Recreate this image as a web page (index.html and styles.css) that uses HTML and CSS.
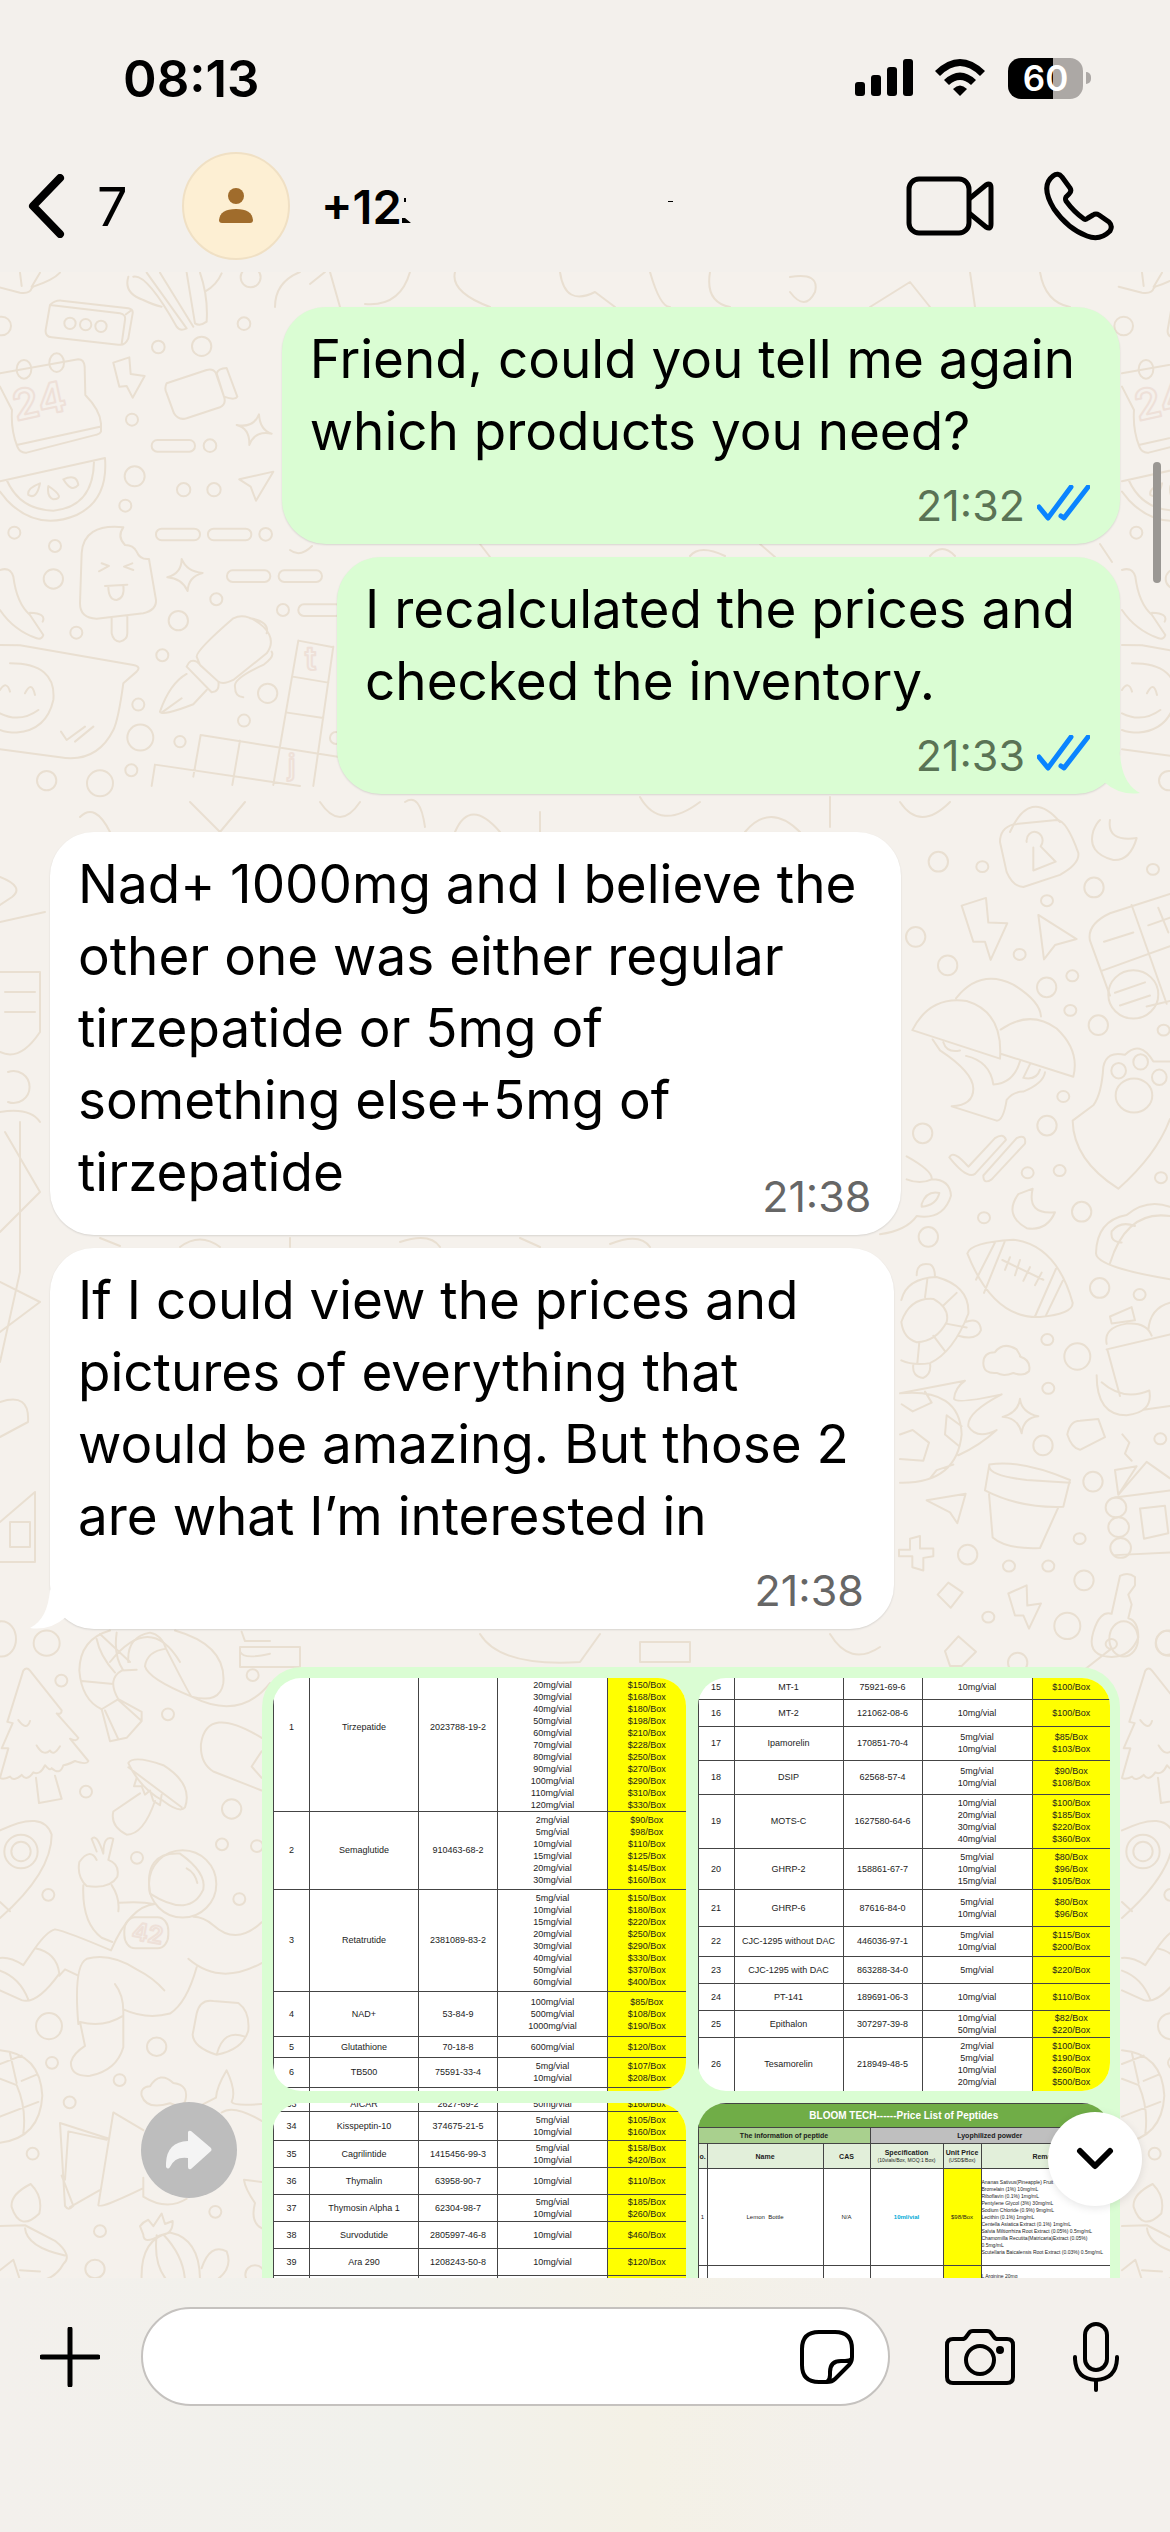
FILE: index.html
```html
<!DOCTYPE html>
<html lang="en">
<head>
<meta charset="utf-8">
<meta name="viewport" content="width=device-width, initial-scale=1">
<title>Chat</title>
<link rel="stylesheet" href="styles.css">
</head>
<body>
<header class="top">
  <div class="status">
    <time class="clock">08:13</time>
    <div class="status-icons">
      <svg width="58" height="38" viewBox="0 0 58 38"><rect x="0" y="23" width="10" height="14" rx="3"/><rect x="16" y="16" width="10" height="21" rx="3"/><rect x="32" y="8" width="10" height="29" rx="3"/><rect x="48" y="0" width="10" height="37" rx="3"/></svg>
      <svg class="wifi" width="50" height="38" viewBox="0 0 50 38"><path d="M0 12Q25-12 50 12L45 17Q25-3 5 17Z"/><path d="M9 21Q25 6 41 21L36 26Q25 16 14 26Z"/><path d="M18 30Q25 23 32 30L25 37Z"/></svg>
      <div class="battery"><span class="cell">60</span><span class="nub"></span></div>
    </div>
  </div>
  <nav class="bar">
    <a class="back" href="#chats" aria-label="Back to chats"><svg width="37" height="64" viewBox="0 0 37 64"><path d="M32 4L5 32L32 60" fill="none" stroke="#000" stroke-width="8" stroke-linecap="round" stroke-linejoin="round"/></svg><span>7</span></a>
    <a class="contact" href="#contact"><span class="avatar"><svg width="34" height="36" viewBox="0 0 34 36"><circle cx="17" cy="8" r="8"/><path d="M0 32Q1 21 17 21Q33 21 34 32Q34 35 31 35H3Q0 35 0 32Z"/></svg></span>
    <span class="name">+12</span><svg class="scrap" width="290" height="36" viewBox="0 0 290 36"><path d="M0 30H3L9 35H0ZM2 10H4V14H2Z"/><path d="M266 13H271V14H266Z"/></svg></a>
    <button class="icon video" aria-label="Video call"><svg width="88" height="60" viewBox="0 0 88 60"><g fill="none" stroke="#000" stroke-width="5" stroke-linejoin="round"><rect x="3" y="3" width="60" height="54" rx="10"/><path d="M63 23L80 9Q85 6 85 12V48Q85 54 80 51L63 37"/></g></svg></button>
    <button class="icon" aria-label="Voice call"><svg width="70" height="70" viewBox="0 0 70 70"><path d="M9 5Q14 1 18 6L26 17Q28 20 25 23L22 26Q21 28 22 30Q30 41 40 48Q42 49 44 47L49 44Q52 42 55 44L65 51Q69 55 66 60Q56 70 43 65Q24 58 10 38Q-4 15 9 5Z" fill="none" stroke="#000" stroke-width="5" stroke-linejoin="round"/></svg></button>
  </nav>
</header>

<main class="chat">
  <svg class="wallpaper" viewBox="0 0 1170 2006" preserveAspectRatio="xMidYMin slice" aria-hidden="true">
    <defs>
      <g id="doodles-a">
        <g transform="translate(0 -2) scale(.3333)">
          <path d="M-10 50L60 68Q90 72 95 55L100 50Q160 30 180 8M60 8L65 48M120 8L95 50M385 20Q370 70 430 90Q460 105 485 110M400 20Q440 10 530 170Q540 185 560 175L440 8M480 8L580 170M560 8L585 160Q600 170 620 155Q625 80 600 8M615 65Q650 45 665 10M150 105Q165 90 185 92L385 115Q400 118 398 130L385 205Q375 228 355 224L155 202Q135 200 137 180ZM150 105L360 130Q378 133 375 150L365 222M378 133L395 120"/>
          <circle cx="210" cy="160" r="17"/><circle cx="257" cy="164" r="17"/><circle cx="303" cy="169" r="17"/><circle cx="732" cy="161" r="19"/><circle cx="475" cy="231" r="19"/><circle cx="605" cy="229" r="29"/><circle cx="752" cy="22" r="30"/><circle cx="5" cy="168" r="28"/>
          <path d="M0 310L235 268Q252 268 254 290L256 375Q300 420 303 460V485Q300 492 290 494L80 548Q60 550 52 530Q32 480 36 420L0 350M50 525L300 470M340 278L388 262L392 312L434 318L398 383L380 348L358 350ZM500 340Q492 355 500 370L522 430Q535 452 560 445L660 412Q680 402 672 380L648 310Q640 295 620 300ZM650 310Q655 295 680 294L712 380Q706 392 672 380Z"/>
          <ellipse cx="72" cy="298" rx="22" ry="28"/><ellipse cx="170" cy="278" rx="22" ry="28"/>
          <circle cx="396" cy="449" r="18"/><path d="M777 433Q780 480 815 491Q765 480 748 525Q750 475 710 465Q760 475 777 433ZM718 628L820 605L768 692L752 650Z"/>
          <rect x="455" y="510" width="130" height="35" rx="17"/><circle cx="630" cy="527" r="19"/>
          <path d="M0 634L315 564Q325 690 230 735Q110 785 20 690L0 665M20 630Q60 720 160 722Q280 710 282 575M120 640Q80 655 85 675Q110 690 120 640ZM145 648Q140 680 160 688Q200 685 145 648ZM190 628Q230 610 235 645Q215 670 190 628Z"/>
          <circle cx="404" cy="619" r="30"/><circle cx="551" cy="659" r="20"/><circle cx="642" cy="659" r="20"/><circle cx="376" cy="707" r="18"/><circle cx="43" cy="788" r="18"/><circle cx="165" cy="828" r="18"/><circle cx="160" cy="927" r="29"/>
          <rect x="468" y="776" width="132" height="35" rx="17"/><rect x="624" y="776" width="130" height="35" rx="17"/><circle cx="797" cy="793" r="19"/><rect x="681" y="901" width="130" height="35" rx="17"/><rect x="836" y="901" width="130" height="35" rx="17"/><circle cx="849" cy="1020" r="18"/><rect x="895" y="1003" width="130" height="35" rx="17"/>
          <path d="M245 850Q250 760 370 772Q350 800 375 825Q400 825 410 845Q420 870 447 867L468 990Q470 1020 430 1030L290 1046Q240 1045 240 1000ZM335 1043V1090Q340 1115 360 1115Q382 1110 382 1090V1038M305 880L327 888L297 904M397 880L372 890L400 900M315 948L382 944M325 948Q325 990 350 990Q375 985 370 945M545 867Q560 905 608 909Q565 920 563 963Q545 925 502 922Q545 910 545 867Z"/>
          <circle cx="649" cy="988" r="18"/><circle cx="535" cy="1052" r="29"/><circle cx="229" cy="1088" r="18"/><circle cx="487" cy="1156" r="18"/><circle cx="803" cy="1270" r="29"/><circle cx="415" cy="1304" r="18"/><circle cx="732" cy="1352" r="18"/><circle cx="421" cy="1403" r="39"/><circle cx="540" cy="1415" r="17"/><circle cx="394" cy="1501" r="18"/><circle cx="140" cy="1532" r="29"/><circle cx="300" cy="1540" r="39"/><circle cx="1008" cy="1404" r="18"/>
          <path d="M0 900Q30 890 40 920Q50 1000 90 1035L130 1095Q125 1110 110 1105Q40 1080 0 1020M90 1028Q140 1030 128 1055M0 1125L60 1126L400 1185Q425 1190 410 1205L370 1240Q355 1350 340 1380Q290 1480 180 1462L0 1438M30 1180Q170 1180 160 1290Q140 1380 50 1388Q20 1388 0 1380M0 1330Q60 1360 115 1320M75 1270Q95 1230 105 1275M0 1260Q20 1230 30 1265M183 1385L200 1410L255 1370M225 1415L280 1370"/>
          <path d="M590 1160Q590 1140 700 1045Q740 1025 790 1070Q830 1110 800 1150L700 1230Q670 1245 655 1235L600 1185ZM560 1190Q570 1165 590 1175L655 1235Q660 1265 635 1267ZM560 1212Q510 1240 480 1325Q485 1340 580 1303L620 1260M485 1328L545 1285M750 1045Q810 1055 800 1090M815 1145Q825 1160 790 1185Q700 1225 705 1250Q705 1280 730 1282M895 1112L820 1545M1000 1130L940 1548M895 1112L1000 1132M878 1220L985 1238M862 1328L970 1344M602 1395L1075 1470M602 1395L580 1520M720 1412L697 1545M465 1484L900 1548M465 1484L455 1548"/>
        </g>
        <g class="glyphs"><text x="16" y="149" font-size="42" transform="rotate(-12 16 149)">24</text><text x="305" y="398" font-size="32">t</text><text x="288" y="503" font-size="28">j</text></g>
      </g>
    </defs>
    <use href="#doodles-a"/>
    <use href="#doodles-a" x="1122"/>
    <g transform="translate(270 0)"><path d="M5 35Q5 10 30 0M40 12L55 0M70 35L60 0M95 32Q130 35 140 0M220 35Q180 20 185 0M290 0Q295 35 325 20L345 35M380 0Q390 35 400 35M440 0Q435 30 460 35M520 5Q550 0 545 20Q535 40 520 20M600 35L640 10L660 35M700 0L705 35M770 0Q775 30 800 35"/></g>
    <path d="M290 278Q300 286 312 274M480 272L490 285M690 284Q700 272 725 284M760 272L775 285M930 284Q942 270 955 284M1100 272L1112 290M405 530Q420 520 425 555M455 560Q470 525 500 560M540 540V560M640 525Q660 560 700 530M745 560Q770 530 800 560M830 525V555M900 530Q920 560 950 530M1010 560Q1030 515 1060 550M80 545Q95 530 110 560M190 530L220 560L245 530M320 530Q340 560 360 530"/>
    <path d="M100 966L120 974M180 975Q200 960 220 975M290 966V975M400 970Q430 960 440 975M520 966L540 975M610 972Q640 960 650 975M100 1362L130 1390M110 1390Q150 1340 180 1390M240 1375H300V1395H240ZM480 1362Q500 1395 580 1390L600 1362M640 1370H690V1390H640ZM830 1362Q850 1395 880 1375M0 605Q25 615 12 625L0 633M0 840Q30 835 40 850M20 850V1000L0 1090M0 650L45 640M0 700H40V760Q20 790 0 780M5 720H35M5 740H35M8 800A16 16 0 1 1 8 830M5 860L40 920L0 960M0 1010L40 1030L0 1060M0 1130Q30 1120 28 1150L0 1165M0 1250L35 1220V1290H0M10 1250H30V1275H10Z"/>
    <g transform="translate(880 548) scale(.3333 .5486)">
      <path d="M360 40Q360 15 400 8L530 0Q560 0 595 60Q600 80 540 100L430 122Q400 122 380 95ZM440 40A24 16 0 1 1 482 48L527 76L460 92V50M690 0Q680 40 770 33Q750 75 700 73Q620 60 640 20Q650 5 660 0M245 156L318 142L325 187L382 188L332 255L315 222H280ZM475 173L590 217L525 228L492 254Z"/>
      <path d="M870 135L690 170Q620 190 630 220L690 320M665 275L870 230M755 155L860 335M800 340L870 330M672 222L760 205M805 192L870 178M835 160L865 205M705 315L795 296M720 338L810 320"/><ellipse cx="760" cy="318" rx="75" ry="44"/>
      <path d="M97 383Q150 320 260 330Q370 350 360 435ZM228 325Q300 270 400 300Q480 330 483 358M362 382Q450 345 530 380Q600 420 580 468L362 426M158 400L180 420Q280 460 280 490Q280 520 215 522L350 548Q370 548 380 510Q400 495 430 495Q490 480 495 460M258 430Q330 440 340 482Q400 480 420 440M190 405Q200 425 240 420M450 445L430 470Q470 475 480 455"/>
      <path d="M670 450Q680 420 735 428Q780 400 820 440Q850 440 870 440M670 450Q665 500 640 520L578 548Q580 620 715 672Q830 610 870 545"/><ellipse cx="716" cy="457" rx="22" ry="14"/><ellipse cx="782" cy="441" rx="22" ry="14"/><ellipse cx="838" cy="469" rx="22" ry="14"/><ellipse cx="762" cy="502" rx="55" ry="31"/>
      <path d="M208 615Q220 600 265 632L345 580Q370 570 378 583L285 645Q260 655 208 615ZM310 648L410 580Q440 572 435 590L335 655Q310 665 310 648ZM458 672Q440 720 525 715Q500 750 440 744Q370 720 415 682ZM80 613Q160 640 155 655Q120 665 80 655M155 655Q210 655 213 685Q190 730 110 722Q80 748 0 755M125 700Q140 675 178 680Q170 702 125 705Z"/>
      <path d="M262 790Q270 770 400 765Q530 775 578 880Q580 900 480 906Q340 910 262 790ZM345 770L288 838M375 767L312 862M528 818L465 905M548 840L498 903M367 802L490 838M390 797L375 820M420 802L405 830M450 815L430 840M485 825L465 848M648 790Q650 730 740 720Q800 690 870 705M648 790Q650 815 870 837M690 808Q740 710 870 722M725 770Q690 770 695 750Q720 730 765 740M64 875Q80 835 170 833Q270 850 265 900Q220 970 150 990Q100 995 64 985M64 915Q90 870 160 873Q210 890 200 915Q170 950 110 952Q70 945 64 915M135 870L142 838M190 885L230 862M198 918L260 925M160 940L195 968M118 952L112 990M110 830Q110 805 150 810Q165 815 165 833M255 915Q300 905 303 930Q290 950 235 940M100 992Q95 1015 130 1017Q155 1010 150 990"/>
      <path d="M310 990Q310 970 345 970Q370 950 410 965Q425 980 420 978Q455 985 447 1005Q430 1015 400 1008Q370 1015 350 1008Q310 1010 310 990ZM680 955Q670 925 740 918Q800 915 815 940M680 965L870 938M682 965L720 1050M690 905L755 888L765 912L695 918ZM805 930Q810 890 870 880M650 1012Q650 1085 740 1085Q820 1080 808 1040Q730 1060 665 1025M790 1075L870 1068M60 1045L255 1022Q225 1035 222 1055Q230 1065 365 1047Q260 1080 265 1105Q290 1130 350 1112Q300 1140 235 1158M60 1045Q240 1035 245 1120Q230 1210 60 1208M60 1120L98 1112L147 1135L130 1168L60 1165M200 1085L245 1105M200 1085L195 1120L235 1140M65 1065L98 1078L155 1062L135 1042M150 1200L170 1185L220 1175M420 1055Q425 1080 475 1087Q430 1090 425 1118Q415 1090 368 1088Q415 1080 420 1055ZM562 1120Q570 1095 600 1095L655 1092L675 1125L600 1148Q575 1145 562 1120Z"/>
      <path d="M328 1175Q420 1165 570 1203L550 1252Q420 1255 315 1222ZM328 1175Q320 1195 440 1203L570 1208M327 1228L338 1308Q380 1330 480 1327L535 1253M140 1240L257 1228L232 1282L210 1262ZM90 1310L120 1305V1328H160V1342L130 1345V1368L97 1362V1342H57V1330H90ZM173 1412L205 1390L248 1408L212 1436ZM385 1410L440 1395L442 1432L483 1428L447 1474L430 1450H405ZM195 1515L235 1488L288 1516L245 1542H210ZM705 1185L770 1178L715 1230ZM715 1230L800 1170L870 1200M705 1235L870 1222M780 1255L855 1250L865 1300L792 1310ZM705 1340L870 1335M727 1120L748 1135L735 1155L755 1168M640 1480Q660 1440 695 1447L720 1378Q745 1370 765 1380V1395L745 1412L755 1430L745 1455Q775 1460 775 1490Q750 1530 680 1525Q620 1520 640 1480ZM695 1510L615 1548"/><ellipse cx="708" cy="1253" rx="31" ry="18"/><ellipse cx="716" cy="1289" rx="31" ry="18"/><ellipse cx="722" cy="1327" rx="31" ry="18"/><ellipse cx="694" cy="1502" rx="17" ry="9"/>
      <g><ellipse cx="175" cy="76" rx="29" ry="18"/><ellipse cx="307" cy="85" rx="18" ry="10"/><ellipse cx="642" cy="123" rx="29" ry="18"/><ellipse cx="819" cy="90" rx="18" ry="10"/><ellipse cx="501" cy="147" rx="18" ry="10"/><ellipse cx="419" cy="245" rx="18" ry="10"/><ellipse cx="107" cy="213" rx="29" ry="18"/><ellipse cx="203" cy="265" rx="29" ry="18"/><ellipse cx="500" cy="305" rx="29" ry="18"/><ellipse cx="577" cy="284" rx="18" ry="10"/><ellipse cx="571" cy="347" rx="18" ry="10"/><ellipse cx="655" cy="374" rx="29" ry="18"/><ellipse cx="851" cy="383" rx="18" ry="10"/><ellipse cx="550" cy="504" rx="18" ry="10"/><ellipse cx="501" cy="557" rx="29" ry="18"/><ellipse cx="128" cy="571" rx="29" ry="18"/><ellipse cx="443" cy="643" rx="18" ry="10"/><ellipse cx="539" cy="639" rx="18" ry="10"/><ellipse cx="843" cy="652" rx="18" ry="10"/><ellipse cx="605" cy="714" rx="29" ry="18"/><ellipse cx="312" cy="725" rx="18" ry="10"/><ellipse cx="145" cy="760" rx="29" ry="18"/><ellipse cx="659" cy="853" rx="29" ry="18"/><ellipse cx="779" cy="865" rx="18" ry="10"/><ellipse cx="502" cy="947" rx="18" ry="10"/><ellipse cx="592" cy="978" rx="39" ry="24"/><ellipse cx="505" cy="1036" rx="18" ry="10"/><ellipse cx="489" cy="1140" rx="29" ry="18"/><ellipse cx="841" cy="1128" rx="18" ry="10"/><ellipse cx="639" cy="1206" rx="29" ry="18"/><ellipse cx="599" cy="1310" rx="18" ry="10"/><ellipse cx="263" cy="1339" rx="29" ry="18"/><ellipse cx="387" cy="1360" rx="18" ry="10"/><ellipse cx="505" cy="1360" rx="18" ry="10"/><ellipse cx="612" cy="1386" rx="29" ry="18"/><ellipse cx="325" cy="1453" rx="18" ry="10"/><ellipse cx="562" cy="1469" rx="39" ry="24"/><ellipse cx="413" cy="1536" rx="29" ry="18"/><ellipse cx="860" cy="1500" rx="32" ry="22"/></g>
    </g>
    <g id="doodles-b">
      <g transform="translate(0 1348) scale(.3333 .4209)">
      <path d="M70 120Q80 110 90 120L185 215Q185 225 170 222L235 280Q230 290 210 282L265 335Q260 345 225 335Q200 345 190 345Q180 370 155 352Q150 360 135 345Q120 370 100 362Q80 385 65 368Q40 385 30 372Q10 380 0 375L25 305L5 305L38 245L22 242ZM108 375L117 435L185 425L165 370M55 238Q80 265 90 240M110 298Q130 325 150 310Q160 325 180 300"/>
      <path d="M330 25Q240 45 238 120Q245 190 305 212L330 288L380 280L425 240L425 218L355 188Q320 140 365 120L410 118M290 45Q300 85 345 125M350 30Q340 85 370 120M245 145L340 152M305 212L355 188M315 215L355 283M355 190L425 240M385 100Q380 40 450 30Q485 35 498 68Q570 180 575 182Q660 200 670 150Q680 60 525 25M435 110Q440 75 498 68M435 110Q445 140 575 182Q720 240 810 150M720 75Q730 95 810 80M725 28L735 50H810"/>
      <path d="M385 340Q400 320 490 345Q580 390 555 445Q540 460 490 430Q420 400 385 340ZM385 350L545 445M410 375L402 395H425L435 415L450 405L460 430L480 440L485 415M420 412L340 455Q330 490 380 510Q430 510 465 430M785 280Q620 200 603 295Q600 340 640 360L785 405M785 312L755 348L785 375M0 500Q130 450 155 510Q155 600 0 708M0 670L30 692"/>
      <ellipse cx="63" cy="550" rx="50" ry="40"/><ellipse cx="63" cy="550" rx="29" ry="23"/><ellipse cx="548" cy="627" rx="101" ry="80"/><path d="M450 650Q430 550 540 555Q620 600 610 640Q570 710 450 650M560 590Q585 600 592 625"/>
      <path d="M290 550L275 520Q290 505 310 555Q310 510 340 520L325 570Q360 580 352 610Q330 640 260 632Q230 610 238 575Q270 540 290 570M250 630Q245 720 305 755L337 765M335 630Q360 660 355 692M357 672Q420 668 465 675Q390 680 333 785Q200 740 165 735Q140 740 105 780L70 820Q30 800 0 803M105 780Q170 790 178 840Q110 915 65 903L0 880M0 833Q60 850 85 902M178 845L195 830L235 845M235 960Q220 820 260 805Q330 790 410 830Q460 850 493 880M345 865Q370 890 370 930V1015Q350 1070 270 1083Q210 1085 213 1050Q220 1030 255 1012L240 955M240 955Q310 970 370 940M370 925Q440 950 510 935Q560 910 590 825M565 805Q660 870 785 815M580 705Q610 705 640 725Q710 775 785 718"/><rect x="373" y="706" width="132" height="74" rx="32"/>
      <path d="M590 935Q600 900 640 905L715 910Q750 930 745 975Q730 1020 650 1033Q580 1015 578 985ZM650 1033Q670 970 735 990M425 1130Q420 1110 450 1108Q480 1070 520 1100Q570 1105 555 1145Q540 1160 510 1148Q440 1165 425 1130M648 1135Q650 1110 680 1070Q710 1120 695 1145Q700 1155 785 1150M648 1135L610 1150M0 1022Q120 1030 127 1130Q120 1230 0 1242M0 1055L65 1035M30 1030L50 1100M0 1090L50 1105Q80 1160 70 1220M65 1095L110 1080M0 1180L115 1145M180 1195L195 1392Q205 1405 220 1392L185 1320M180 1195L325 1232M205 1215L195 1330M205 1215L320 1235M340 1170L295 1390Q300 1400 430 1350M340 1170L430 1212M210 1395L298 1355M430 1325V1370Q500 1405 560 1375M35 1395Q30 1365 92 1340Q130 1370 118 1410Q60 1455 35 1395ZM0 1440L75 1438L165 1475Q220 1510 190 1530Q170 1560 130 1568M75 1445Q80 1490 195 1510M0 1545L40 1520L60 1568M60 1545L120 1548M425 1568Q420 1470 510 1455Q600 1470 600 1568M470 1462Q460 1530 500 1568M490 1460Q550 1510 555 1568M420 1440Q430 1430 445 1425L460 1440L485 1410L495 1435L518 1428Q520 1460 480 1462Q430 1485 430 1460ZM605 1540Q630 1480 680 1500Q700 1540 650 1568M785 1335L732 1330Q735 1350 765 1385Q750 1430 785 1445M665 1170Q700 1150 785 1190"/>
      <ellipse cx="140" cy="55" rx="39" ry="30"/><ellipse cx="5" cy="45" rx="43" ry="42"/><ellipse cx="184" cy="144" rx="18" ry="14"/><ellipse cx="504" cy="224" rx="18" ry="14"/><ellipse cx="758" cy="131" rx="18" ry="14"/><ellipse cx="258" cy="408" rx="18" ry="14"/><ellipse cx="695" cy="449" rx="29" ry="23"/><ellipse cx="666" cy="533" rx="18" ry="14"/><ellipse cx="771" cy="537" rx="18" ry="14"/><ellipse cx="411" cy="565" rx="18" ry="14"/><ellipse cx="145" cy="653" rx="18" ry="14"/><ellipse cx="718" cy="663" rx="18" ry="14"/><ellipse cx="147" cy="965" rx="39" ry="31"/><ellipse cx="470" cy="1014" rx="29" ry="22"/><ellipse cx="156" cy="1052" rx="18" ry="14"/><ellipse cx="359" cy="1093" rx="18" ry="14"/><ellipse cx="209" cy="1146" rx="18" ry="14"/><ellipse cx="98" cy="1268" rx="18" ry="14"/><ellipse cx="646" cy="1406" rx="18" ry="14"/><ellipse cx="300" cy="1452" rx="18" ry="14"/><ellipse cx="285" cy="1542" rx="29" ry="22"/><ellipse cx="765" cy="1555" rx="29" ry="22"/>
      </g>
      <g class="glyphs"><text x="131" y="1667" font-size="24" transform="rotate(10 131 1667)">42</text></g>
    </g>
    <use href="#doodles-b" x="1122"/>
  </svg>

  <article class="bubble out">
    <p>Friend, could you tell me again<br>which products you need?</p>
    <footer><time>21:32</time><svg class="ticks" width="53" height="36" viewBox="0 0 53 36"><path d="M2 22L11 33L34 2M24 31L27 33L51 2"/></svg></footer>
  </article>
  <article class="bubble out last">
    <p>I recalculated the prices and<br>checked the inventory.</p>
    <footer><time>21:33</time><svg class="ticks" width="53" height="36" viewBox="0 0 53 36"><path d="M2 22L11 33L34 2M24 31L27 33L51 2"/></svg></footer>
    <svg class="tail tail-out" width="40" height="40" viewBox="0 0 40 40"><path d="M20 0Q22 30 40 39Q20 42 4 28Z"/></svg>
  </article>
  <article class="bubble in inline-time">
    <p>Nad+ 1000mg and I believe the<br>other one was either regular<br>tirzepatide or 5mg of<br>something else+5mg of<br>tirzepatide</p>
    <footer><time>21:38</time></footer>
  </article>
  <article class="bubble in last">
    <p>If I could view the prices and<br>pictures of everything that<br>would be amazing. But those 2<br>are what I’m interested in</p>
    <footer><time>21:38</time></footer>
    <svg class="tail tail-in" width="40" height="40" viewBox="0 0 40 40"><path d="M20 0Q18 30 0 39Q20 42 36 28Z"/></svg>
  </article>

  <div class="media-row">
    <button class="forward" aria-label="Forward"><svg width="46" height="40" viewBox="0 0 46 40"><path d="M22 2Q23 0 25 1L45 18Q46 20 45 21L25 39Q22 40 22 37V28Q9 26 4 37Q2 40 0 37Q-1 12 22 11Z" fill="#f4f4f4"/></svg></button>
    <article class="album">
      <div class="tile end"><table class="list">
        <colgroup><col class="c-no"><col class="c-name"><col class="c-cas"><col class="c-spec"><col></colgroup>
        <tr class="h168 open"><td>1</td><td>Tirzepatide</td><td>2023788-19-2</td><td>20mg/vial<br>30mg/vial<br>40mg/vial<br>50mg/vial<br>60mg/vial<br>70mg/vial<br>80mg/vial<br>90mg/vial<br>100mg/vial<br>110mg/vial<br>120mg/vial</td><td>$150/Box<br>$168/Box<br>$180/Box<br>$198/Box<br>$210/Box<br>$228/Box<br>$250/Box<br>$270/Box<br>$290/Box<br>$310/Box<br>$330/Box</td></tr>
        <tr class="h78"><td>2</td><td>Semaglutide</td><td>910463-68-2</td><td>2mg/vial<br>5mg/vial<br>10mg/vial<br>15mg/vial<br>20mg/vial<br>30mg/vial</td><td>$90/Box<br>$98/Box<br>$110/Box<br>$125/Box<br>$145/Box<br>$160/Box</td></tr>
        <tr class="h102"><td>3</td><td>Retatrutide</td><td>2381089-83-2</td><td>5mg/vial<br>10mg/vial<br>15mg/vial<br>20mg/vial<br>30mg/vial<br>40mg/vial<br>50mg/vial<br>60mg/vial</td><td>$150/Box<br>$180/Box<br>$220/Box<br>$250/Box<br>$290/Box<br>$330/Box<br>$370/Box<br>$400/Box</td></tr>
        <tr class="h45"><td>4</td><td>NAD+</td><td>53-84-9</td><td>100mg/vial<br>500mg/vial<br>1000mg/vial</td><td>$85/Box<br>$108/Box<br>$190/Box</td></tr>
        <tr class="h21"><td>5</td><td>Glutathione</td><td>70-18-8</td><td>600mg/vial</td><td>$120/Box</td></tr>
        <tr class="h30"><td>6</td><td>TB500</td><td>75591-33-4</td><td>5mg/vial<br>10mg/vial</td><td>$107/Box<br>$208/Box</td></tr>
        <tr class="h4"><td></td><td></td><td></td><td></td><td></td></tr>
      </table></div>
      <div class="tile end"><table class="list">
        <colgroup><col class="c-no"><col class="c-name"><col class="c-cas"><col class="c-spec"><col></colgroup>
        <tr class="h25"><td>15</td><td>MT-1</td><td>75921-69-6</td><td>10mg/vial</td><td>$100/Box</td></tr>
        <tr class="h27"><td>16</td><td>MT-2</td><td>121062-08-6</td><td>10mg/vial</td><td>$100/Box</td></tr>
        <tr class="h34"><td>17</td><td>Ipamorelin</td><td>170851-70-4</td><td>5mg/vial<br>10mg/vial</td><td>$85/Box<br>$103/Box</td></tr>
        <tr class="h34"><td>18</td><td>DSIP</td><td>62568-57-4</td><td>5mg/vial<br>10mg/vial</td><td>$90/Box<br>$108/Box</td></tr>
        <tr class="h54"><td>19</td><td>MOTS-C</td><td>1627580-64-6</td><td>10mg/vial<br>20mg/vial<br>30mg/vial<br>40mg/vial</td><td>$100/Box<br>$185/Box<br>$220/Box<br>$360/Box</td></tr>
        <tr class="h41"><td>20</td><td>GHRP-2</td><td>158861-67-7</td><td>5mg/vial<br>10mg/vial<br>15mg/vial</td><td>$80/Box<br>$96/Box<br>$105/Box</td></tr>
        <tr class="h37"><td>21</td><td>GHRP-6</td><td>87616-84-0</td><td>5mg/vial<br>10mg/vial</td><td>$80/Box<br>$96/Box</td></tr>
        <tr class="h30"><td>22</td><td>CJC-1295 without DAC</td><td>446036-97-1</td><td>5mg/vial<br>10mg/vial</td><td>$115/Box<br>$200/Box</td></tr>
        <tr class="h27"><td>23</td><td>CJC-1295 with DAC</td><td>863288-34-0</td><td>5mg/vial</td><td>$220/Box</td></tr>
        <tr class="h27"><td>24</td><td>PT-141</td><td>189691-06-3</td><td>10mg/vial</td><td>$110/Box</td></tr>
        <tr class="h27"><td>25</td><td>Epithalon</td><td>307297-39-8</td><td>10mg/vial<br>50mg/vial</td><td>$82/Box<br>$220/Box</td></tr>
        <tr class="h54"><td>26</td><td>Tesamorelin</td><td>218949-48-5</td><td>2mg/vial<br>5mg/vial<br>10mg/vial<br>20mg/vial</td><td>$100/Box<br>$190/Box<br>$260/Box<br>$500/Box</td></tr>
      </table></div>
      <div class="tile"><table class="list scrolled">
        <colgroup><col class="c-no"><col class="c-name"><col class="c-cas"><col class="c-spec"><col></colgroup>
        <tr class="h16"><td>33</td><td>AICAR</td><td>2627-69-2</td><td>50mg/vial</td><td>$160/Box</td></tr>
        <tr class="h29"><td>34</td><td>Kisspeptin-10</td><td>374675-21-5</td><td>5mg/vial<br>10mg/vial</td><td>$105/Box<br>$160/Box</td></tr>
        <tr class="h27"><td>35</td><td>Cagrilintide</td><td>1415456-99-3</td><td>5mg/vial<br>10mg/vial</td><td>$158/Box<br>$420/Box</td></tr>
        <tr class="h27"><td>36</td><td>Thymalin</td><td>63958-90-7</td><td>10mg/vial</td><td>$110/Box</td></tr>
        <tr class="h27"><td>37</td><td>Thymosin Alpha 1</td><td>62304-98-7</td><td>5mg/vial<br>10mg/vial</td><td>$185/Box<br>$260/Box</td></tr>
        <tr class="h27"><td>38</td><td>Survodutide</td><td>2805997-46-8</td><td>10mg/vial</td><td>$460/Box</td></tr>
        <tr class="h27"><td>39</td><td>Ara 290</td><td>1208243-50-8</td><td>10mg/vial</td><td>$120/Box</td></tr>
        <tr class="h45"><td></td><td></td><td></td><td></td><td></td></tr>
      </table></div>
      <div class="tile"><table class="list sheet">
        <colgroup><col class="s-no"><col class="s-name"><col class="s-cas"><col class="s-spec"><col class="s-price"><col></colgroup>
        <tr class="title"><th colspan="6">BLOOM TECH------Price List of Peptides</th></tr>
        <tr class="groups"><th colspan="3">The information of peptide</th><th colspan="3">Lyophilized powder</th></tr>
        <tr class="heads"><th>o.</th><th>Name</th><th>CAS</th><th>Specification<small>(10vials/Box, MOQ:1 Box)</small></th><th>Unit Price<small>(USD$/Box)</small></th><th>Remark</th></tr>
        <tr class="item"><td>1</td><td>Lemon&nbsp; Bottle</td><td>N/A</td><td class="cyan">10ml/vial</td><td class="price">$98/Box</td><td class="remark">Ananas Sativus(Pineapple) Fruit<br>Bromelain (1%) 10mg/mL<br>Riboflavin (0.1%) 1mg/mL<br>Pentylene Glycol (3%) 30mg/mL<br>Sodium Chloride (0.9%) 9mg/mL<br>Lecithin (0.1%) 1mg/mL<br>Centella Asiatica Extract (0.1%) 1mg/mL<br>Salvia Miltiorrhiza Root Extract (0.05%) 0.5mg/mL<br>Chamomilla Recutita(Matricaria)Extract (0.05%)<br>0.5mg/mL<br>Scutellaria Baicalensis Root Extract (0.03%) 0.5mg/mL</td></tr>
        <tr class="item next"><td></td><td></td><td></td><td></td><td class="price"></td><td class="remark">L Arginine 20mg</td></tr>
      </table></div>
    </article>
  </div>

  <div class="scrollbar"></div>
  <button class="to-bottom" aria-label="Scroll to latest message"><svg width="38" height="24" viewBox="0 0 38 24"><path d="M4 4L19 19L34 4" fill="none" stroke="#000" stroke-width="6" stroke-linecap="round" stroke-linejoin="round"/></svg></button>
</main>

<form class="composer">
  <button type="button" class="icon" aria-label="Attach"><svg width="60" height="60" viewBox="0 0 60 60"><path d="M30 2V58M2 30H58" stroke="#000" stroke-width="5" stroke-linecap="round"/></svg></button>
  <div class="field">
    <input type="text" aria-label="Message">
    <button type="button" class="icon" aria-label="Stickers"><svg width="56" height="56" viewBox="0 0 56 56"><path d="M20 3H36Q53 3 53 20V28Q53 33 50 36L36 50Q33 53 28 53H20Q3 53 3 36V20Q3 3 20 3ZM53 30Q51 32 46 32H42Q31 32 31 43V46Q31 51 28 53" fill="none" stroke="#000" stroke-width="4" stroke-linejoin="round"/></svg></button>
  </div>
  <button type="button" class="icon camera" aria-label="Camera"><svg width="70" height="56" viewBox="0 0 70 56"><g fill="none" stroke="#000" stroke-width="4" stroke-linejoin="round"><path d="M8 10H17Q20 10 21 8L24 4Q25 2 28 2H42Q45 2 46 4L49 8Q50 10 53 10H62Q68 10 68 16V48Q68 54 62 54H8Q2 54 2 48V16Q2 10 8 10Z"/><circle cx="35" cy="31" r="14"/></g><circle cx="55" cy="21" r="4"/></svg></button>
  <button type="button" class="icon" aria-label="Record voice message"><svg width="48" height="70" viewBox="0 0 48 70"><g fill="none" stroke="#000" stroke-width="4" stroke-linecap="round"><rect x="13" y="2" width="22" height="46" rx="11"/><path d="M3 35V37Q4 57 24 58Q44 57 45 37V35M24 58V68"/></g></svg></button>
</form>
</body>
</html>
```
FILE: styles.css
```css
* { box-sizing: border-box; }

body {
  margin: 0;
  height: 100vh;
  display: flex;
  flex-direction: column;
  background: #f3f0ec;
  color: #000;
  font-family: Inter, "Liberation Sans", sans-serif;
}

button {
  flex: none;
  border: 0;
  padding: 0;
  background: none;
  display: flex;
  align-items: center;
  justify-content: center;
}

a { color: inherit; text-decoration: none; }
svg { display: block; flex: none; }
p { margin: 0; }

/* Status bar and navigation */
.top { flex: none; padding-bottom: 12px; }

.status {
  height: 152px;
  padding: 4px 79px 0 123px;
  display: flex;
  align-items: center;
  justify-content: space-between;
}

.clock { font-size: 51px; font-weight: 600; }
.status-icons { display: flex; align-items: center; }
.wifi { margin: 0 23px 0 22px; }
.battery { display: flex; align-items: center; gap: 3px; }

.cell {
  width: 75px;
  height: 41px;
  border-radius: 13px;
  background: linear-gradient(90deg, #000 60%, #aca8a5 60%);
  color: #fff;
  font-size: 35px;
  font-weight: 600;
  line-height: 41px;
  text-align: center;
}

.nub { width: 5px; height: 12px; border-radius: 0 6px 6px 0; background: #aca8a5; }

.bar { height: 108px; padding: 0 56px 0 28px; display: flex; align-items: center; }
.back { display: flex; align-items: center; gap: 32px; width: 154px; font-size: 54px; }
.contact { flex: 1; min-width: 0; display: flex; align-items: center; }

.avatar {
  width: 108px;
  height: 108px;
  margin-right: 31px;
  border: 2px solid #f0e0c4;
  border-radius: 50%;
  background: #fdefd3;
  fill: #a06c2c;
  display: flex;
  align-items: center;
  justify-content: center;
}

.name { font-size: 47px; font-weight: 600; }
.video { margin-right: 50px; }

/* Conversation */
.chat {
  position: relative;
  isolation: isolate;
  flex: 1;
  min-height: 0;
  overflow: hidden;
  padding: 35px 50px 0;
  background: #f5f1ec;
  display: flex;
  flex-direction: column;
}

.wallpaper {
  position: absolute;
  inset: 0;
  z-index: -1;
  width: 100%;
  height: 100%;
  fill: none;
  stroke: #e9dfd1;
  stroke-width: 2;
  stroke-linejoin: round;
  stroke-linecap: round;
}

.wallpaper path,
.wallpaper circle,
.wallpaper ellipse,
.wallpaper rect { vector-effect: non-scaling-stroke; }

.glyphs { font-family: Inter, sans-serif; font-weight: 600; stroke: #eee0d8; }

.bubble {
  position: relative;
  flex: none;
  width: fit-content;
  margin-bottom: 13px;
  padding: 16px 45px 15px 28px;
  border-radius: 44px;
  box-shadow: 0 1px 2px #0000001f;
}

.bubble p { font-size: 53px; line-height: 72px; }
.bubble.last { margin-bottom: 38px; }
.out { align-self: flex-end; background: #dafdd3; }
.in { background: #fff; }

.bubble footer {
  margin: 14px -15px 0 0;
  display: flex;
  justify-content: flex-end;
  gap: 12px;
  color: #666;
  font-size: 43px;
  line-height: 48px;
}

.out footer { color: #5a7355; }
.bubble.inline-time footer { margin-top: -36px; }
.ticks { margin-top: 4px; fill: none; stroke: #0a84ff; stroke-width: 5; stroke-linecap: round; stroke-linejoin: round; }

.tail { position: absolute; bottom: 0; }
.tail-out { right: -20px; fill: #dafdd3; }
.tail-in { left: -20px; fill: #fff; }

/* Picture album */
.media-row { flex: none; display: flex; align-items: center; justify-content: flex-end; gap: 25px; }
.forward { width: 96px; height: 96px; border-radius: 50%; background: #bdbdbd; }

.album {
  width: 858px;
  padding: 11px 10px 116px 11px;
  border-radius: 40px;
  background: #dafdd3;
  display: grid;
  grid-template-columns: 1fr 1fr;
  gap: 12px;
}

.tile {
  height: 413px;
  border-radius: 28px;
  overflow: hidden;
  background: #fff;
  display: flex;
  flex-direction: column;
}

.tile.end { justify-content: flex-end; }

.list {
  flex: none;
  width: 100%;
  border-collapse: collapse;
  table-layout: fixed;
  font: 9px/12px "Liberation Sans", sans-serif;
  color: #1c1c1c;
  text-align: center;
}

.list td, .list th { padding: 0; border: 1px solid #444; }
.list tr:last-child td { border-bottom: 0; }
.list td:last-child { background: #ff0; border-right: 0; }
.scrolled { margin-top: -8px; }

.c-no { width: 36px; }
.c-name { width: 109px; }
.c-cas { width: 79px; }
.c-spec { width: 110px; }

.open td { vertical-align: bottom; }
.open td:nth-child(-n+3) { vertical-align: middle; }
.h4 { height: 4px; }
.h16 { height: 16px; }
.h21 { height: 21px; }
.h25 { height: 25px; }
.h27 { height: 27px; }
.h29 { height: 29px; }
.h30 { height: 30px; }
.h34 { height: 34px; }
.h37 { height: 37px; }
.h41 { height: 41px; }
.h45 { height: 45px; }
.h54 { height: 54px; }
.h78 { height: 78px; }
.h102 { height: 102px; }
.h168 { height: 168px; }

.sheet { font-size: 6px; line-height: 7px; }
.s-no { width: 9px; }
.s-name { width: 116px; }
.s-cas { width: 47px; }
.s-spec { width: 73px; }
.s-price { width: 38px; }
.title { height: 24px; background: #70ad47; color: #fff; font-size: 10px; }
.groups { height: 16px; background: #a9d08e; font-size: 7px; }
.groups th:last-child { background: #bfbfbf; }
.heads { height: 25px; background: #e2efda; font-size: 7px; line-height: 9px; }
.heads small { display: block; font-size: 5px; font-weight: 400; line-height: 7px; white-space: nowrap; }
.item { height: 97px; }
.item.next { height: 180px; vertical-align: top; }
.item .cyan { color: #00a9d6; font-weight: 700; }
.item .price { background: #ff0; }
.list .item .remark { background: #fff; font-size: 5px; text-align: left; white-space: nowrap; }
.list .next .remark { padding-top: 7px; }

/* Floating controls */
.scrollbar {
  position: absolute;
  top: 190px;
  right: 9px;
  width: 8px;
  height: 121px;
  border-radius: 4px;
  background: #9a9793;
}

.to-bottom {
  position: absolute;
  right: 28px;
  bottom: 72px;
  width: 94px;
  height: 94px;
  border-radius: 50%;
  background: #fff;
  box-shadow: 0 2px 8px #0000001a;
}

/* Composer */
.composer {
  flex: none;
  padding: 29px 50px 126px 40px;
  background: linear-gradient(90deg, #f3f0ec, #f1f1ec 35%, #f4f1e6 55%, #f3f0ec 75%);
  display: flex;
  align-items: center;
}

.field {
  flex: 1;
  min-width: 0;
  height: 99px;
  margin: 0 55px 0 41px;
  padding: 0 33px 0 40px;
  border: 2px solid #c5c2bf;
  border-radius: 50px;
  background: #fff;
  display: flex;
  align-items: center;
}

.field input {
  flex: 1;
  min-width: 0;
  border: 0;
  outline: 0;
  background: none;
  font: 50px Inter, sans-serif;
}

.camera { margin-right: 57px; }
```
